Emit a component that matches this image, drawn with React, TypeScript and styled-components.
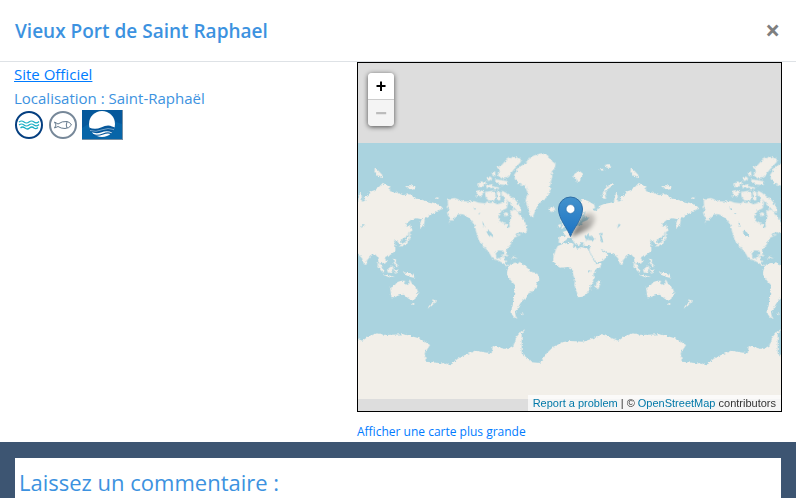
import React from "react";
import styled, { createGlobalStyle } from "styled-components";

const GlobalStyle = createGlobalStyle`
  *, *::before, *::after { box-sizing: border-box; }
  html, body, #root { height: 100%; }
  body {
    margin: 0;
    background: #ffffff;
    color: #3c92e0;
    font-family: "Segoe UI", "Open Sans", "Noto Sans", sans-serif;
    font-size: 15px;
    line-height: 24px;
  }
`;

const Page = styled.main`
  display: flex;
  flex-direction: column;
  min-height: 100%;
`;

const Header = styled.header`
  display: flex;
  align-items: center;
  justify-content: space-between;
  padding: 16px 16px 15px 15px;
  border-bottom: 1px solid #dee2e6;
`;

const Title = styled.h5`
  margin: 0;
  font-size: 19px;
  font-weight: 600;
  line-height: 30px;
`;

const CloseButton = styled.button`
  padding: 0 0 2px;
  border: 0;
  background: none;
  color: #7f7f7f;
  font: 700 26px/28px "Open Sans", sans-serif;
  cursor: pointer;
`;

const Content = styled.section`
  display: grid;
  grid-template-columns: 343fr 425fr;
  padding: 0 14px;
`;

const Details = styled.div`
  display: flex;
  flex-direction: column;
  align-items: flex-start;
`;

const SiteLink = styled.a`
  color: #007bff;
  text-decoration: underline;
`;

const Location = styled.p`
  margin: 0;
`;

const Badges = styled.div`
  display: flex;
  gap: 4px;
  svg { display: block; }
`;

const MapColumn = styled.div`
  display: flex;
  flex-direction: column;
`;

const MapFrame = styled.div`
  position: relative;
  height: 350px;
  border: 1px solid #000000;
  background: #dddddd;
  overflow: hidden;
`;

const WorldMap = styled.svg`
  display: block;
  width: 100%;
  height: 100%;
`;

const ZoomControl = styled.div`
  position: absolute;
  top: 10px;
  left: 10px;
  display: flex;
  flex-direction: column;
  width: 26px;
  border-radius: 4px;
  box-shadow: 0 1px 5px rgba(0, 0, 0, 0.65);
`;

const ZoomButton = styled.button<{ $end?: boolean }>`
  height: ${(p) => (p.$end ? "26px" : "27px")};
  padding: 0;
  border: 0;
  border-bottom: ${(p) => (p.$end ? "0" : "1px solid #cccccc")};
  border-radius: ${(p) => (p.$end ? "0 0 4px 4px" : "4px 4px 0 0")};
  background: ${(p) => (p.$end ? "#f4f4f4" : "#ffffff")};
  color: ${(p) => (p.$end ? "#bbbbbb" : "#000000")};
  font: bold ${(p) => (p.$end ? "20px" : "18px")}/26px "Liberation Sans", Arial, sans-serif;
`;

const Attribution = styled.div`
  position: absolute;
  right: 0;
  bottom: 0;
  padding: 0 5px;
  background: rgba(255, 255, 255, 0.7);
  color: #333333;
  font: 11px/16px "Liberation Sans", Arial, sans-serif;
  white-space: nowrap;
  a { color: #0078a8; text-decoration: none; }
`;

const LargerMap = styled.a`
  align-self: flex-start;
  margin: 12px 0 2px;
  color: #007bff;
  font-size: 12px;
  line-height: 16px;
  text-decoration: none;
`;

const Footer = styled.section`
  flex: 1;
  display: flex;
  padding: 16px 15px 0;
  background: #3d5572;
`;

const CommentPanel = styled.div`
  flex: 1;
  padding: 8px 4px 0;
  background: #ffffff;
`;

const CommentTitle = styled.h4`
  margin: 0;
  font-size: 22px;
  font-weight: 400;
  line-height: 32px;
`;

const closed = (d: string) => <path d={`M${d}Z`} />;

/* The land of one Web-Mercator world, drawn on a 768-unit square. */
const WorldTile = () => (
  <symbol id="world" viewBox="0 0 768 768" overflow="visible">
    <g fill="#f2efe9" filter="url(#coast)">
      <g transform="translate(-9 -9)">
        {closed("38 180 52 175 60 174 75 180 95 185 118 183 130 188 150 190 158 184 165 189 175 186 185 192 198 190 205 186 212 175 219 190 215 205 200 212 190 230 193 242 205 250 215 252 218 263 224 262 223 245 230 230 225 215 235 207 245 212 252 224 262 230 270 248 276 264 275 275 268 280 255 276 240 284 248 288 250 282 258 284 238 293 230 305 228 312 219 323 213 332 215 343 209 342 204 332 190 331 182 338 184 352 195 356 203 350 208 347 205 360 212 362 213 372 220 376 226 373 218 379 205 370 190 362 172 355 165 342 148 319 151 332 140 308 133 305 128 292 122 270 118 255 108 240 95 228 82 222 68 224 55 236 40 250 48 236 40 228 36 218 45 205 34 203 39 195")}
        {closed("200 152 212 158 225 168 240 178 255 198 258 215 250 216 240 206 232 196 222 186 210 175 200 167")}
        {closed("150 156 162 154 175 152 182 165 178 182 160 181 152 171")}
        {closed("125 152 138 150 148 158 140 167 126 170")}
        {closed("185 155 197 156 196 180 188 182")}
        {closed("200 75 215 58 235 50 255 55 258 65 245 80 235 90 225 104 212 115 200 116 188 106 195 92 186 82")}
        {closed("180 118 200 120 218 124 218 135 198 134 182 128")}
        {closed("155 112 166 110 172 116 160 124")}
        {closed("130 130 146 124 154 130 142 138 132 142")}
        {closed("152 136 172 133 176 143 156 144")}
        {closed("175 140 192 142 190 149 176 147")}
        {closed("170 98 180 94 182 108 174 108")}
        {closed("205 220 216 217 222 225 210 229")}
        {closed("237 105 250 85 262 75 275 68 285 52 300 45 320 40 338 45 345 58 362 72 358 85 350 95 352 110 345 135 345 155 335 172 322 182 308 195 300 215 293 231 285 225 278 205 272 180 278 160 270 137 250 131 240 118")}
        {closed("340 206 348 203 357 203 361 209 350 216 342 212")}
        {closed("196 346 208 342 222 347 216 349")}
        {closed("226 352 238 351 246 354 236 356")}
      </g>
      <g transform="translate(-9 261)">
        {closed("218 118 226 103 240 98 258 100 270 108 282 118 285 125 300 128 315 137 313 148 305 160 303 172 295 183 280 190 275 202 262 212 255 222 248 235 240 245 242 258 248 265 238 263 230 252 230 235 235 215 238 190 240 165 228 152 218 138 216 128")}
        {closed("260 250 267 251 264 255 260 254")}
      </g>
      <g transform="translate(324 81)">
        {closed("29 240 35 228 52 221 72 218 83 221 81 230 95 236 105 231 125 236 132 250 141 268 150 283 167 279 162 292 147 302 142 312 145 330 134 345 132 358 122 372 110 380 97 382 92 365 85 345 87 330 80 310 80 298 67 291 42 293 32 287 22 273 22 262")}
        {closed("152 337 161 329 164 338 157 357 151 358 149 350")}
        {closed("38 218 40 200 58 201 50 186 60 182 70 172 80 166 90 168 105 165 110 156 125 150 130 142 118 143 115 135 120 122 108 135 106 150 98 160 92 146 82 151 79 138 88 120 98 100 108 88 125 92 145 104 147 115 135 118 150 124 160 108 174 102 190 99 204 96 207 72 214 68 216 95 226 92 222 82 235 78 240 65 255 60 270 48 278 38 290 46 299 50 300 64 320 68 340 76 360 72 375 85 400 91 430 98 450 105 460 117 448 119 435 128 420 135 405 145 402 165 392 178 388 165 396 148 380 145 365 148 350 160 348 169 360 171 358 185 348 200 332 209 335 222 326 223 322 210 312 212 316 225 316 242 304 253 287 260 284 264 291 274 284 282 274 275 270 279 279 293 272 289 265 275 262 260 254 252 242 258 232 270 228 285 222 283 216 265 207 256 195 248 182 248 172 240 164 236 173 247 186 254 174 269 152 278 140 260 130 242 132 228 120 228 110 226 114 218 105 216 99 229 92 219 84 206 94 218 91 225 83 216 76 203 68 203 60 210 50 219")}
        {closed("45 148 51 150 53 162 60 172 48 178 51 167")}
        {closed("37 164 45 162 44 173 36 174")}
        {closed("85 12 100 2 112 12 107 20 100 35 94 38 89 24 82 20")}
        {closed("202 39 190 44 176 57 168 74 169 85 180 87 176 73 187 56 204 43")}
      </g>
      <g transform="translate(366 -264)">
        {closed("114 344 126 341 136 342 128 347")}
        {closed("134 330 146 327 155 338 140 338")}
        {closed("213 338 221 345 235 360 233 370 219 361 211 350")}
        {closed("308 392 320 390 335 398 318 403 309 399")}
        {closed("396 427 405 428 402 432 396 431")}
      </g>
      <g transform="translate(366 261)">
        {closed("218 95 228 104 240 122 238 129 226 116")}
        {closed("238 131 262 138 272 141 260 143 240 136")}
        {closed("249 119 258 112 264 106 269 116 263 129 252 128")}
        {closed("271 117 280 118 277 131 272 130")}
        {closed("268 86 275 87 275 98 284 108 280 113 270 100")}
        {closed("297 125 308 129 320 129 333 144 322 142 306 136")}
        {closed("306 26 314 20 316 -3 323 -4 325 3 318 5 318 25 309 42 296 45 291 51 288 46 298 39 310 34")}
        {closed("316 -20 321 -10 318 4 314 0")}
        {closed("258 175 270 168 280 156 292 152 303 152 301 159 312 166 317 148 325 162 338 175 342 185 338 202 328 212 315 207 308 201 300 194 285 196 272 202 262 202 261 190")}
        {closed("324 220 331 219 330 225 326 225")}
        {closed("389 207 396 212 389 222 380 230 372 236 375 227 388 217")}
      </g>
      <g transform="translate(-264 261)">
        {closed("263 398 265 398 298 404 330 382 375 362 425 370 428 348 470 358 490 347 500 320 512 305 526 297 515 312 515 370 545 397 570 399 590 370 610 350 640 336 660 333 700 335 730 325 755 312 775 320 805 332 825 318 850 310 875 315 930 313 975 325 1008 345 992 370 995 395 1034 399 1060 404 1060 507 263 507")}
      </g>
    </g>
    <g fill="#aad3df" filter="url(#coast)">
      <path d="M440 278L450 273 458 279 470 287 466 293 442 290ZM482 270L495 270 492 280 496 298 486 297 488 286ZM536 253L546 242 548 246Z" />
      <path d="M143 268L152 263 160 269 166 281 160 282 151 274ZM133 239L137 240 140 252 136 250ZM107 192L114 196 108 200ZM121 209L128 212 122 214Z" />
      <path d="M454 379L450 383 454 389 458 384Z" />
    </g>
  </symbol>
);

const MapDrawing = () => (
  <WorldMap viewBox="0 0 423 348" preserveAspectRatio="xMidYMid slice" role="img" aria-label="Carte du monde">
    <defs>
      <filter id="coast" x="-5%" y="-5%" width="110%" height="110%">
        <feTurbulence type="fractalNoise" baseFrequency="0.12" numOctaves="3" seed="4" result="noise" />
        <feDisplacementMap in="SourceGraphic" in2="noise" scale="10" xChannelSelector="R" yChannelSelector="G" />
      </filter>
      <linearGradient id="pin" x1="0" y1="0" x2="0" y2="1">
        <stop offset="0" stopColor="#4392cc" />
        <stop offset="1" stopColor="#1c73c4" />
      </linearGradient>
      <linearGradient id="shade" x1="0" y1="1" x2="1" y2="0">
        <stop offset="0" stopColor="#000" stopOpacity="0.6" />
        <stop offset="1" stopColor="#000" stopOpacity="0.1" />
      </linearGradient>
      <filter id="soft" x="-30%" y="-30%" width="160%" height="160%">
        <feGaussianBlur stdDeviation="2" />
      </filter>
      <clipPath id="worldBand">
        <rect x="-10" y="80" width="443" height="256" />
      </clipPath>
      <WorldTile />
    </defs>
    <g clipPath="url(#worldBand)">
      <rect x="-10" y="80" width="443" height="256" fill="#aad3df" />
      {[-176, 80, 336].map((x) => (
        <use key={x} href="#world" x={x} y="80" width="256" height="256" />
      ))}
      <rect x="-10" y="326" width="443" height="10" fill="#f2efe9" />
    </g>
    <path d="M213 174L221 157Q228 147 236 151Q240 158 231 166Z" fill="url(#shade)" filter="url(#soft)" />
    <path
      d="M212.500 173.500C210 166 200.500 156 200.500 146A12 12 0 0 1 224.500 146C224.500 156 215 166 212.500 173.500Z"
      fill="url(#pin)"
      stroke="#2e6da4"
    />
    <circle cx="212.500" cy="146" r="4.400" fill="#fff" stroke="#2a6aa3" strokeWidth="0.600" />
  </WorldMap>
);

const BathingBadge = () => (
  <svg width="30" height="30" viewBox="0 0 30 30" role="img" aria-label="Baignade">
    <circle cx="15" cy="15" r="13" fill="#fff" stroke="#053f80" strokeWidth="2" />
    <g fill="none" stroke="#18afc4" strokeWidth="1.200">
      <path d="M5 12q2.500-2 5 0q2.500 2 5 0q2.500-2 5 0q2.500 2 5-0.500" />
      <path d="M5 15q2.500-2 5 0q2.500 2 5 0q2.500-2 5 0q2.500 2 5-0.500" />
      <path d="M6.500 18q2-2 4.500 0q2.500 2 4.500 0q2.500-2 4.500 0q2 1.500 4-0.500" />
    </g>
  </svg>
);

const FishingBadge = () => (
  <svg width="30" height="30" viewBox="0 0 30 30" role="img" aria-label="Pêche">
    <circle cx="15" cy="15" r="13" fill="#fff" stroke="#778899" strokeWidth="2" />
    <path d="M6.500 12L10 14Q14 11 19 11.500Q22 12 23.500 15Q21 18.500 17 18.500Q13 18.500 10 16.500L6.500 18L8 15ZM19 12Q17.500 15 19 18" fill="none" stroke="#64798c" />
  </svg>
);

const BlueFlagBadge = () => (
  <svg width="41" height="30" viewBox="0 0 41 30" role="img" aria-label="Pavillon bleu">
    <rect width="41" height="30" fill="#7690a5" />
    <rect width="40" height="29" fill="#05589b" />
    <path d="M0 18Q20 5 40 14V29H0Z" fill="#0765a8" />
    <circle cx="20" cy="14" r="13" fill="#fff" />
    <path d="M7 17.500Q13 20 19 17.500Q26 14 30 16.500L33 17.500Q32 21 30 22.500Q25 20 19 22.500Q14 24 9 22Z" fill="#07589b" />
    <g fill="none">
      <path d="M8 20.500Q14 22.500 20 19.800Q26 17.500 32 19.500" stroke="#8fb6d4" strokeWidth="0.800" />
      <path d="M11 24.800Q16 26 21 24T29 23.600" stroke="#07589b" strokeWidth="1.200" />
    </g>
  </svg>
);

export default function App() {
  return (
    <>
      <GlobalStyle />
      <Page>
        <Header>
          <Title>Vieux Port de Saint Raphael</Title>
          <CloseButton type="button" aria-label="Fermer">×</CloseButton>
        </Header>
        <Content>
          <Details>
            <SiteLink href="#site">Site Officiel</SiteLink>
            <Location>Localisation : Saint-Raphaël</Location>
            <Badges>
              <BathingBadge />
              <FishingBadge />
              <BlueFlagBadge />
            </Badges>
          </Details>
          <MapColumn>
            <MapFrame>
              <MapDrawing />
              <ZoomControl>
                <ZoomButton type="button" aria-label="Zoom avant">+</ZoomButton>
                <ZoomButton type="button" aria-label="Zoom arrière" disabled $end>−</ZoomButton>
              </ZoomControl>
              <Attribution>
                <a href="#report">Report a problem</a> | © <a href="#osm">OpenStreetMap</a> contributors
              </Attribution>
            </MapFrame>
            <LargerMap href="#carte">Afficher une carte plus grande</LargerMap>
          </MapColumn>
        </Content>
        <Footer>
          <CommentPanel>
            <CommentTitle>Laissez un commentaire :</CommentTitle>
          </CommentPanel>
        </Footer>
      </Page>
    </>
  );
}
